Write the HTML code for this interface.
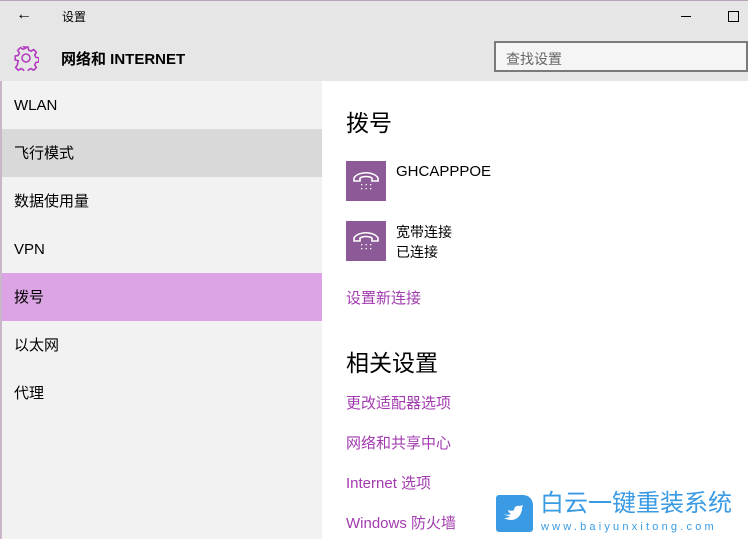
<!DOCTYPE html>
<html><head><meta charset="utf-8"><style>
html,body{margin:0;width:748px;height:539px;overflow:hidden}
body{position:relative;background:#fff;font-family:"Liberation Sans","Noto Sans CJK SC",sans-serif;color:#000}
.a{position:absolute;white-space:nowrap}
.hdr{left:0;top:0;width:748px;height:81px;background:#e6e6e6;border-top:1px solid #b9a3b8;box-sizing:border-box}
.side{left:0;top:81px;width:322px;height:458px;background:#f2f2f2;border-left:2px solid #c9b6c8;box-sizing:border-box;overflow:hidden}
.it{position:absolute;left:0;width:320px;height:48px;line-height:50px;padding-left:12px;box-sizing:border-box;font-size:15px}
.lk{position:absolute;left:346px;color:#a33bb0;font-size:15px}
.ic{position:absolute;left:346px;width:40px;height:40px;background:#8c5a96}
</style></head><body>
<div class="a hdr"></div>
<div class="a" style="left:16px;top:6px;font-size:16px">&#8592;</div>
<div class="a" style="left:62px;top:8px;font-size:12px">设置</div>
<div class="a" style="left:681px;top:16px;width:10px;height:1px;background:#000"></div>
<div class="a" style="left:728px;top:11px;width:9px;height:9px;border:1px solid #000"></div>
<svg class="a" style="left:13px;top:45px" width="26" height="26" viewBox="0 0 26 26"><g fill="none" stroke="#b43cc0" stroke-width="1.6"><circle cx="13" cy="13" r="4"/><path d="M11 2h4l.6 3 2.4 1.2 2.6-1.7 2.8 2.8-1.7 2.6 1.2 2.4 3 .6v4l-3 .6-1.2 2.4 1.7 2.6-2.8 2.8-2.6-1.7-2.4 1.2-.6 3h-4l-.6-3-2.4-1.2-2.6 1.7-2.8-2.8 1.7-2.6L5.2 15.6l-3-.6v-4l3-.6 1.2-2.4-1.7-2.6 2.8-2.8 2.6 1.7 2.4-1.2z"/></g></svg>
<div class="a" style="left:61px;top:48px;font-size:15px;font-weight:bold">网络和 INTERNET</div>
<div class="a" style="left:494px;top:41px;width:254px;height:31px;border:2px solid #7a7a7a;box-sizing:border-box;background:#f5f5f5;font-size:14px;color:#666;padding:6px 0 0 10px">查找设置</div>
<div class="a side">
<div class="it" style="top:0">WLAN</div>
<div class="it" style="top:48px;background:#d9d9d9">飞行模式</div>
<div class="it" style="top:96px">数据使用量</div>
<div class="it" style="top:144px">VPN</div>
<div class="it" style="top:192px;background:#dca4e4">拨号</div>
<div class="it" style="top:240px">以太网</div>
<div class="it" style="top:288px">代理</div>
</div>
<div class="a" style="left:346px;top:104px;font-size:23px">拨号</div>
<div class="ic" style="top:161px"></div>
<div class="ic" style="top:221px"></div>
<svg class="a" style="left:346px;top:161px" width="40" height="40"><g fill="none" stroke="#fff" stroke-width="1.6"><path d="M8 20v-3c4-7 20-7 24 0v3h-6v-3c-3-2-9-2-12 0v3z"/></g><g fill="#fff"><rect x="15" y="23" width="1.3" height="1.3"/><rect x="19.5" y="23" width="1.3" height="1.3"/><rect x="24" y="23" width="1.3" height="1.3"/><rect x="15" y="27" width="1.3" height="1.3"/><rect x="19.5" y="27" width="1.3" height="1.3"/><rect x="24" y="27" width="1.3" height="1.3"/></g></svg>
<svg class="a" style="left:346px;top:221px" width="40" height="40"><g fill="none" stroke="#fff" stroke-width="1.6"><path d="M8 20v-3c4-7 20-7 24 0v3h-6v-3c-3-2-9-2-12 0v3z"/></g><g fill="#fff"><rect x="15" y="23" width="1.3" height="1.3"/><rect x="19.5" y="23" width="1.3" height="1.3"/><rect x="24" y="23" width="1.3" height="1.3"/><rect x="15" y="27" width="1.3" height="1.3"/><rect x="19.5" y="27" width="1.3" height="1.3"/><rect x="24" y="27" width="1.3" height="1.3"/></g></svg>
<div class="a" style="left:396px;top:163px;font-size:15px">GHCAPPPOE</div>
<div class="a" style="left:396px;top:222px;font-size:14px;line-height:20px">宽带连接<br>已连接</div>
<div class="lk" style="top:287px">设置新连接</div>
<div class="a" style="left:346px;top:344px;font-size:23px">相关设置</div>
<div class="lk" style="top:392px">更改适配器选项</div>
<div class="lk" style="top:432px">网络和共享中心</div>
<div class="lk" style="top:472px">Internet 选项</div>
<div class="lk" style="top:512px">Windows 防火墙</div>
<div class="a" style="left:496px;top:495px;width:37px;height:37px;background:#3a9be4;border-radius:3px 10px 3px 3px"></div>
<svg class="a" style="left:500px;top:500px" width="30" height="28"><path d="M4 14c3 1 5 1 7 0-2-1-3-3-3-4 3 1 5 1 6 0 0-3 3-5 6-4l3-1-1 3c0 6-4 12-11 12-3 0-5-1-7-2 2 0 4 0 6-2-3 0-5-1-6-2z" fill="#fff"/></svg>
<div class="a" style="left:540px;top:488px;color:#3a9be4;font-size:24px;line-height:32px">白云一键重装系统</div>
<div class="a" style="left:541px;top:521px;color:#3a9be4;font-size:11px;letter-spacing:3.2px">www.baiyunxitong.com</div>
</body></html>
